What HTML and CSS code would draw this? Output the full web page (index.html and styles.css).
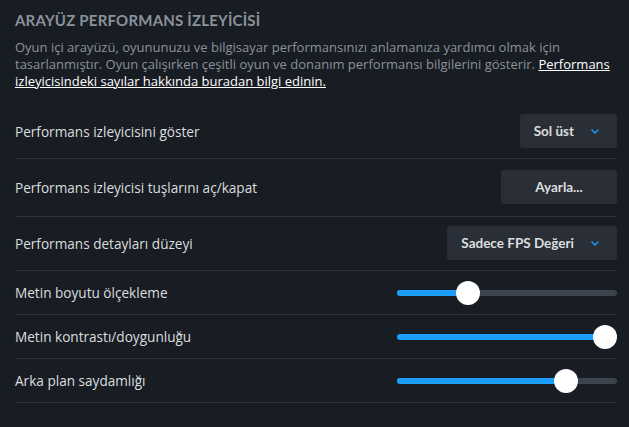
FILE: index.html
```html
<!DOCTYPE html>
<html lang="tr">
<head>
<meta charset="utf-8">
<link rel="stylesheet" href="styles.css">
</head>
<body>
<div class="section">
  <h2 class="title">Arayüz Performans İzleyicisi</h2>
  <p class="desc">Oyun içi arayüzü, oyununuzu ve bilgisayar performansınızı anlamanıza yardımcı olmak için tasarlanmıştır. Oyun çalışırken çeşitli oyun ve donanım performansı bilgilerini gösterir. <a class="link" href="#">Performans izleyicisindeki sayılar hakkında buradan bilgi edinin.</a></p>

  <div class="row row-a">
    <span class="label">Performans izleyicisini göster</span>
    <div class="dropdown"><span>Sol üst</span><svg class="chev" width="8" height="5" viewBox="0 0 8 5"><polyline points="0.5,0.5 4,4 7.5,0.5" fill="none" stroke="#1a9fff" stroke-width="1.3"/></svg></div>
  </div>
  <div class="row row-b">
    <span class="label">Performans izleyicisi tuşlarını aç/kapat</span>
    <div class="button">Ayarla...</div>
  </div>
  <div class="row row-c">
    <span class="label">Performans detayları düzeyi</span>
    <div class="dropdown"><span>Sadece FPS Değeri</span><svg class="chev" width="8" height="5" viewBox="0 0 8 5"><polyline points="0.5,0.5 4,4 7.5,0.5" fill="none" stroke="#1a9fff" stroke-width="1.3"/></svg></div>
  </div>
  <div class="row row-s">
    <span class="label">Metin boyutu ölçekleme</span>
    <div class="slider"><div class="fill" style="width:71px"></div><div class="thumb" style="left:59px"></div></div>
  </div>
  <div class="row row-s">
    <span class="label">Metin kontrastı/doygunluğu</span>
    <div class="slider"><div class="fill" style="width:208px"></div><div class="thumb" style="left:196px"></div></div>
  </div>
  <div class="row row-s">
    <span class="label">Arka plan saydamlığı</span>
    <div class="slider"><div class="fill" style="width:169px"></div><div class="thumb" style="left:157px"></div></div>
  </div>
</div>
</body>
</html>
```

FILE: styles.css
```css
html, body {
  margin: 0;
  padding: 0;
  background: #181c23;
  width: 629px;
  height: 427px;
  overflow: hidden;
}
body {
  font-family: "Open Sans", "Liberation Sans", Arial, sans-serif;
  color: #dcdedf;
}
.section {
  padding: 10px 12px 0 15px;
}
.title {
  margin: 0;
  font-family: Lato, "Open Sans", sans-serif;
  font-size: 15px;
  line-height: 20px;
  font-weight: 700;
  text-transform: uppercase;
  letter-spacing: 0.2px;
  color: #8b929a;
}
.desc {
  margin: 9px 0 0 0;
  font-size: 13px;
  line-height: 17px;
  color: #8b929a;
}
.link {
  color: #ffffff;
  font-weight: 500;
  text-decoration: underline;
}
.row {
  display: flex;
  align-items: center;
  justify-content: space-between;
  border-bottom: 1px solid #30343c;
}
.row-a {
  margin-top: 14px;
  padding: 10px 0 10px 0;
}
.row-b {
  padding: 11px 0 12px 0;
}
.row-c {
  padding: 9px 0 10px 0;
}
.row-s {
  height: 43px;
}
.label {
  font-size: 13.6px;
  color: #dcdedf;
}
.dropdown {
  display: flex;
  align-items: center;
  gap: 17px;
  height: 34px;
  padding: 0 18px 0 14px;
  background: #2a2e36;
  border-radius: 3px;
  font-family: Lato, "Open Sans", sans-serif;
  font-size: 13.5px;
  font-weight: 700;
  color: #dcdedf;
}
.chev {
  display: block;
}
.button {
  display: flex;
  align-items: center;
  justify-content: center;
  width: 116px;
  height: 34px;
  background: #2a2e36;
  border-radius: 3px;
  font-family: Lato, "Open Sans", sans-serif;
  font-size: 13.5px;
  font-weight: 700;
  color: #dcdedf;
}
.slider {
  position: relative;
  width: 220px;
  height: 6px;
  border-radius: 3px;
  background: #3d4450;
}
.fill {
  height: 6px;
  border-radius: 3px;
  background: #1a9fff;
}
.thumb {
  position: absolute;
  top: -9px;
  width: 24px;
  height: 24px;
  border-radius: 50%;
  background: #ffffff;
}
```
